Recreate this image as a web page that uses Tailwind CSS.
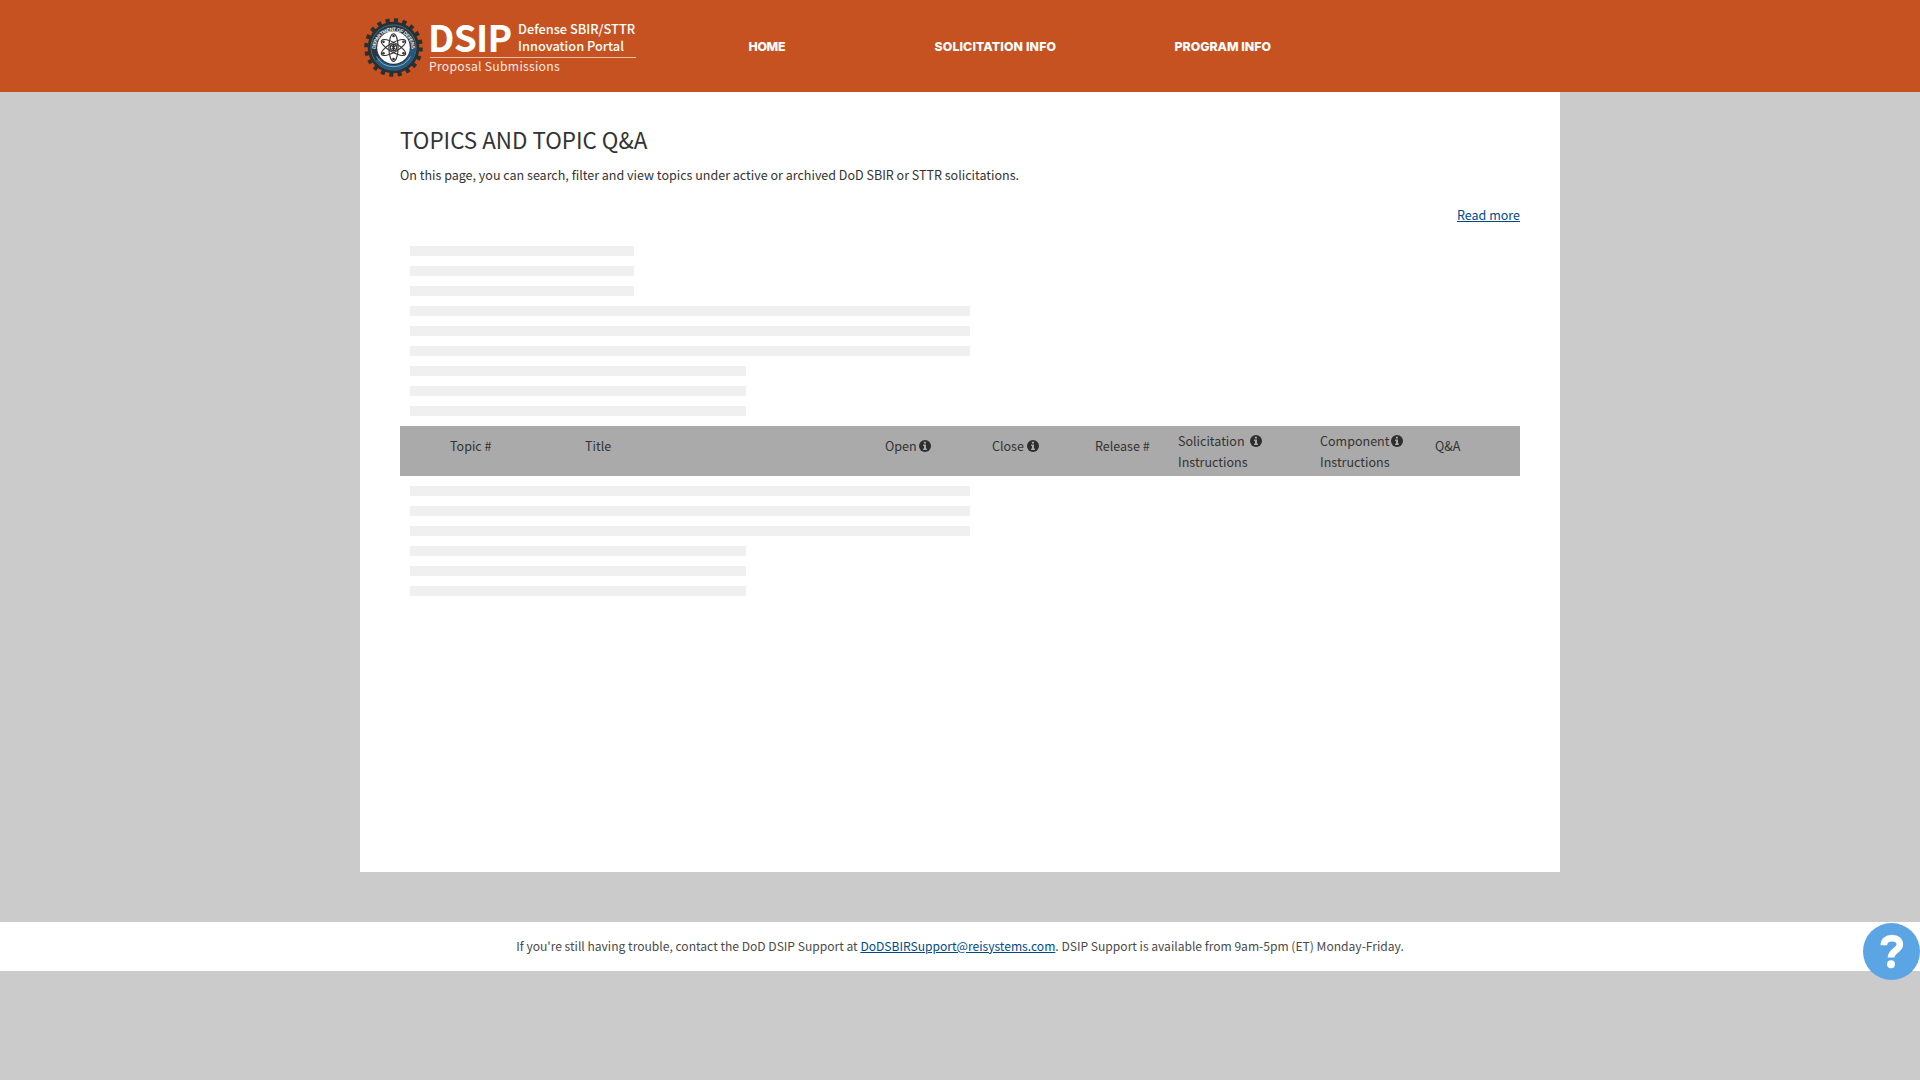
<!DOCTYPE html>
<html lang="en">
<head>
<meta charset="utf-8">
<title>Topics and Topic Q&amp;A</title>
<script src="https://cdn.jsdelivr.net/npm/@tailwindcss/browser@4"></script>
</head>
<body class="h-screen overflow-hidden bg-[#cbcbcb] font-['Noto_Sans_CJK_SC',sans-serif] text-[12.53px] leading-5 text-[#333]">
<svg class="hidden">
  <symbol id="info" viewBox="0 0 12 12"><circle cx="6" cy="6" r="6" fill="#2d2d2d"/><path d="M4.9 1.8h2v1.7h-2zM4.1 4.6h2.9v3.9h.9v1.4H4.1V8.5H5V6h-.9z" fill="#aaa"/></symbol>
</svg>

<header class="h-[92px] bg-[#c65221] text-white">
  <div class="mx-auto flex h-full w-[1200px]">
    <div class="flex w-[340px] pl-1 pt-[18px]">
      <svg class="size-[59px] shrink-0" viewBox="-29.5 -29.5 59 59">
        <circle r="27" fill="none" stroke="#2d2e30" stroke-width="4.6" stroke-dasharray="4.1 4.382" />
        <circle r="25.8" fill="#2d2e30"/>
        <circle r="22.6" fill="#2b3642" stroke="#2b7f86" stroke-width=".9"/>
        <path d="M-18 13A22 22 0 0 0 22 2L17 0A17 17 0 0 1-14 10Z" fill="#235a85"/>
        <path d="M-17 9A19.3 19.3 0 0 0 17 9" fill="none" stroke="#b8cbd3" stroke-width=".7"/>
        <circle r="16.3" fill="#fff"/>
        <path id="arc" d="M-18 1.5A18 18 0 1 1 18 1.5" fill="none"/>
        <text class="font-['Liberation_Sans',sans-serif] text-[5px] font-bold" fill="#eef3f5"><textPath href="#arc" textLength="59">DEPARTMENT OF DEFENSE</textPath></text>
        <g fill="none" stroke="#333" stroke-width="1.15">
          <ellipse rx="4.6" ry="13.8"/>
          <ellipse rx="4.6" ry="13.8" transform="rotate(60)"/>
          <ellipse rx="4.6" ry="13.8" transform="rotate(120)"/>
          <circle r="3.2"/><path d="M-2 -2L2 2M2 -2L-2 2M0 -4V4"/>
        </g>
        <g fill="#333"><circle cy="-11.5" r="1.3"/><circle cy="11.5" r="1.3"/><circle cx="-10" cy="5.8" r="1.3"/><circle cx="10" cy="5.8" r="1.3"/><circle cx="-10" cy="-5.8" r="1.3"/><circle cx="10" cy="-5.8" r="1.3"/></g>
      </svg>
      <div class="ml-[7px] w-[206px]">
        <div class="flex h-10 border-b border-[#eebfa9]">
          <div class="-ml-[2px] w-[90px] pt-px text-[37px] font-bold leading-[35px] tracking-[-0.7px]">DSIP</div>
          <div class="whitespace-nowrap pt-[2px] text-[12.8px] font-medium leading-[17px]">Defense SBIR/STTR<br>Innovation Portal</div>
        </div>
        <div class="-ml-px -mt-px whitespace-nowrap text-[12.2px] leading-[18px] tracking-[0.27px] text-[#fbe9e1]">Proposal Submissions</div>
      </div>
    </div>
    <nav class="flex items-center pb-px pt-[3px] font-['Inter',sans-serif] text-[12.3px] font-extrabold">
      <a class="ml-[48.5px] w-[186px] tracking-[-0.3px]">HOME</a>
      <a class="w-[240px] tracking-[0.13px]">SOLICITATION INFO</a>
      <a>PROGRAM INFO</a>
    </nav>
  </div>
</header>

<main class="mx-auto h-[780px] w-[1200px] bg-white px-10 pt-8">
  <h1 class="text-[22.4px] leading-[30px]">TOPICS AND TOPIC Q&amp;A</h1>
  <p class="mt-[11px]">On this page, you can search, filter and view topics under active or archived DoD SBIR or STTR solicitations.</p>
  <div class="mt-5 flex justify-end"><a class="text-[#004b87] underline">Read more</a></div>

  <div class="mt-[21px] flex flex-col gap-2.5 pl-2.5 *:h-2.5 *:bg-[#f0f0f0]">
    <div class="w-56"></div><div class="w-56"></div><div class="w-56"></div>
    <div class="w-[560px]"></div><div class="w-[560px]"></div><div class="w-[560px]"></div>
    <div class="w-[336px]"></div><div class="w-[336px]"></div><div class="w-[336px]"></div>
  </div>

  <div class="mt-2.5 flex h-[50px] bg-[#aaa] pl-[50px] pt-1 leading-[21px] whitespace-nowrap">
    <div class="w-[135px] pt-[5px]">Topic #</div>
    <div class="w-[300px] pt-[5px]">Title</div>
    <div class="flex w-[107px] gap-[2.5px] pt-[5px]">Open<svg class="mt-[5px] size-3"><use href="#info"/></svg></div>
    <div class="flex w-[103px] gap-[3px] pt-[5px]">Close<svg class="mt-[5px] size-3"><use href="#info"/></svg></div>
    <div class="w-[83px] pt-[5px]">Release #</div>
    <div class="w-[142px]"><div class="flex gap-[5px]">Solicitation<svg class="mt-[5px] size-3"><use href="#info"/></svg></div>Instructions</div>
    <div class="w-[115px]"><div class="flex gap-[2px]">Component<svg class="mt-[5px] size-3"><use href="#info"/></svg></div>Instructions</div>
    <div class="pt-[5px]">Q&amp;A</div>
  </div>

  <div class="mt-2.5 flex flex-col gap-2.5 pl-2.5 *:h-2.5 *:bg-[#f0f0f0]">
    <div class="w-[560px]"></div><div class="w-[560px]"></div><div class="w-[560px]"></div>
    <div class="w-[336px]"></div><div class="w-[336px]"></div><div class="w-[336px]"></div>
  </div>
</main>

<footer class="mt-[50px] flex h-[49px] items-center justify-center bg-white pb-0.5 text-[12.09px] text-[#4a4a4a]">
  <p>If you're still having trouble, contact the DoD DSIP Support at <a class="text-[#004b87] underline">DoDSBIRSupport@reisystems.com</a>. DSIP Support is available from 9am-5pm (ET) Monday-Friday.</p>
</footer>

<button class="fixed right-0 top-[923px] size-[57px] rounded-full bg-[#5ba5e5]" aria-label="Help">
  <svg viewBox="0 0 57 57"><path d="M20.8 22.3C20.8 17.5 24 15.1 29 15.1c5 0 7.8 2.5 7.8 6.4 0 5.9-8.8 6-8.8 13" fill="none" stroke="#fff" stroke-width="6.6"/><circle cx="28" cy="41.3" r="4" fill="#fff"/></svg>
</button>
</body>
</html>
